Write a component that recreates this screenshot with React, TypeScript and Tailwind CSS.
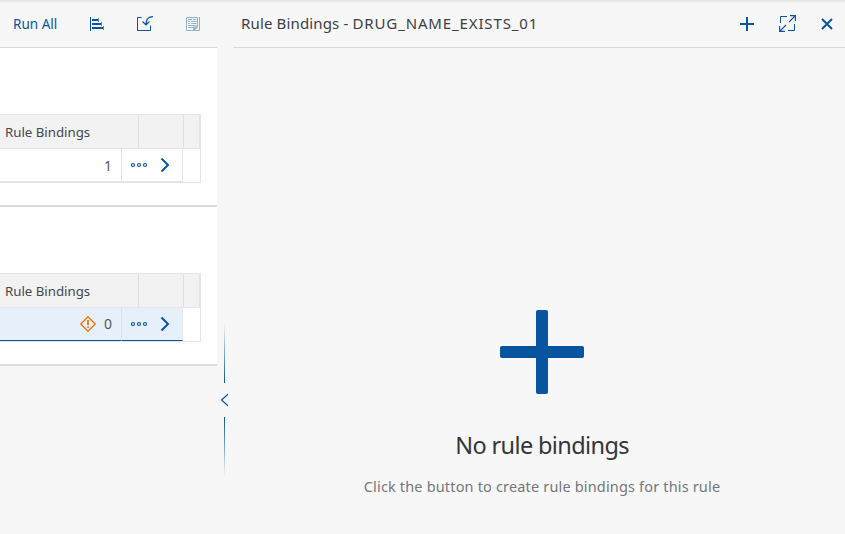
import type { ReactNode } from "react";

function Icon({ w, h, children }: { w: number; h: number; children: ReactNode }) {
  return (
    <svg width={w} height={h} viewBox={`0 0 ${w} ${h}`} fill="none" stroke="#0854a0" className="block shrink-0">
      {children}
    </svg>
  );
}

function BarsIcon() {
  return (
    <Icon w={16} h={16}>
      <path d="M1.500 1v14" strokeWidth="1" />
      <path d="M3 4h6M3 8h9M3 12h11" strokeWidth="2" />
      <path d="M9.500 2v4M12.500 6v4M14.500 10v4" strokeWidth="1" strokeOpacity=".7" />
    </Icon>
  );
}

function ImportIcon() {
  return (
    <Icon w={17} h={16}>
      <path d="M4.500 1.500h-4v13h13v-5" strokeWidth="1" />
      <path d="M16 .6c-4.500 0-7 2.400-7 8M5.500 5.500 9 9l3.500-3.500" strokeWidth="1.200" />
    </Icon>
  );
}

function DocIcon() {
  return (
    <Icon w={16} h={16}>
      <g stroke="#8fb3d5">
        <path d="M1.500 1.500h11v9.500l-4 3.500h-7zM14.500 1v13.500H8" />
        <path d="M3 3.500h4M8 3.500h3.500M3 5.500h2M6 5.500h5.500M3 7.500h2M6 7.500h5.500M3 9.500h8.500M3 11.500h5" strokeWidth="1" />
        <path d="M8.500 14.500V11h4z" fill="#8fb3d5" />
      </g>
    </Icon>
  );
}

function DotsIcon() {
  return (
    <Icon w={18} h={6}>
      <circle cx="3" cy="3" r="1.500" strokeWidth="1.150" />
      <circle cx="9" cy="3" r="1.500" strokeWidth="1.150" />
      <circle cx="15" cy="3" r="1.500" strokeWidth="1.150" />
    </Icon>
  );
}

function ChevronIcon() {
  return (
    <Icon w={10} h={16}>
      <path d="M1.500 1.500 8 8l-6.500 6.500" strokeWidth="2" />
    </Icon>
  );
}

function WarningIcon() {
  return (
    <Icon w={16} h={16}>
      <g stroke="#e9730c">
        <path d="M8 .8 15.200 8 8 15.200.8 8z" strokeWidth="1.300" strokeLinejoin="round" />
        <path d="M8 4v5M8 10.200v1.600" strokeWidth="1.800" />
      </g>
    </Icon>
  );
}

function BindingTable({ count, selected = false }: { count: number; selected?: boolean }) {
  const cell = selected ? "border-b-[#0854a0] bg-[#e5f0fa]" : "border-b-[#e5e5e5] bg-white";
  return (
    <div className="h-[69px] w-[201px] border-y border-r border-[#e5e5e5]">
      <div className="flex h-[34px] border-b border-[#e5e5e5] bg-[#f2f2f2] text-[#45494d]">
        <div className="w-[139px] border-r border-[#e0e0e0] pl-[5px] text-[13.300px] leading-[34px] tracking-[-0.030px]">
          Rule Bindings
        </div>
        <div className="w-[45px] border-r border-[#e0e0e0]" />
        <div className="flex-1 border-r border-[#e5e5e5]" />
      </div>
      <div className="flex h-[33px]">
        <div className={`flex w-[122px] items-center justify-end border-r border-b border-r-[#e0e0e0] pr-[9px] text-[14px] text-[#51555a] ${cell}`}>
          {selected && <WarningIcon />}
          <span className={`ml-2 leading-[30px] ${selected ? "" : "pt-px"}`}>{count}</span>
        </div>
        <div className={`flex w-[61px] items-center border-r border-b border-r-[#e5e5e5] pl-2 ${cell}`}>
          <DotsIcon />
          <span className="ml-3">
            <ChevronIcon />
          </span>
        </div>
        <div className="flex-1 bg-white" />
      </div>
    </div>
  );
}

function Splitter() {
  return (
    <div className="flex w-4 flex-col pt-[323px]">
      <div className="ml-[7px] h-[60px] w-px bg-gradient-to-b from-[#0854a000] to-[#0854a0]" />
      <div className="ml-[3px] flex h-[34px] items-center">
        <Icon w={9} h={14}>
          <path d="M8 1.200 1.500 7 8 12.800" strokeWidth="1.200" />
        </Icon>
      </div>
      <div className="ml-[7px] h-[60px] w-px bg-gradient-to-b from-[#0854a0] to-[#0854a000]" />
    </div>
  );
}

export default function App() {
  return (
    <div className="flex h-[534px] w-[845px] overflow-hidden bg-[#f7f7f7] bg-[linear-gradient(#e2e2e2,#f7f7f7_3px)] font-['Noto_Sans',sans-serif]">
      <section className="w-[217px]">
        <header className="flex h-12 items-center border-b border-[#d9d9d9] pl-[13px] text-[#0854a0]">
          <button className="w-[76px] pt-px text-left text-[13.500px] tracking-[0.020px]">Run All</button>
          <BarsIcon />
          <span className="ml-8">
            <ImportIcon />
          </span>
          <span className="ml-[31px]">
            <DocIcon />
          </span>
        </header>
        <div className="h-[159px] border-b-2 border-[#dcdcdc] bg-white pt-[66px]">
          <BindingTable count={1} />
        </div>
        <div className="h-[159px] border-b-2 border-[#dcdcdc] bg-white pt-[66px]">
          <BindingTable count={0} selected />
        </div>
      </section>
      <Splitter />
      <section className="flex flex-1 flex-col">
        <header className="flex h-12 items-center border-b border-[#d9d9d9] pr-3 pl-2">
          <h1 className="flex-1 whitespace-pre text-[15px] tracking-[0.150px] text-[#3c4044]">
            Rule Bindings - <span className="tracking-[0.860px]">DRUG_NAME_EXISTS_01</span>
          </h1>
          <Icon w={14} h={14}>
            <path d="M0 7h14M7 0v14" strokeWidth="2" />
          </Icon>
          <span className="ml-[25px]">
            <Icon w={17} h={17}>
              <path d="M1.500 8V1.500H8M9 15.500h6.500V9" />
              <path d="M10 7 16 1M11 .6h5.400V6M7 10l-6 6M.6 11v5.400H6" strokeWidth="1.100" />
            </Icon>
          </span>
          <span className="ml-[25px]">
            <Icon w={12} h={12}>
              <path d="m1 1 10 10M11 1 1 11" strokeWidth="2" />
            </Icon>
          </span>
        </header>
        <div className="flex flex-1 flex-col items-center pt-[262px] pl-[6px]">
          <svg width="84" height="84" viewBox="0 0 84 84" fill="#0854a0">
            <rect x="36" width="12" height="84" rx="2" />
            <rect y="36" width="84" height="12" rx="2" />
          </svg>
          <h2 className="mt-[35px] text-[23.500px] leading-8 tracking-[-0.620px] whitespace-nowrap text-[#32363a]">
            No rule bindings
          </h2>
          <p className="mt-[15px] text-[14.500px] leading-5 tracking-[0.165px] whitespace-nowrap text-[#74777a]">
            Click the button to create rule bindings for this rule
          </p>
        </div>
      </section>
    </div>
  );
}
